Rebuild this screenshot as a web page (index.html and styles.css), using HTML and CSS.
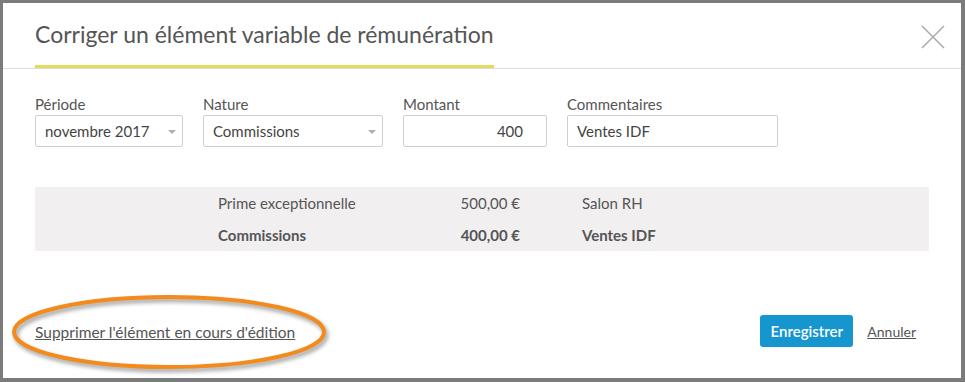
FILE: index.html
```html
<!DOCTYPE html>
<html lang="fr">
<head>
<meta charset="utf-8">
<title>Corriger un élément variable de rémunération</title>
<link rel="stylesheet" href="styles.css">
</head>
<body>
<div class="modal">
  <div class="header">
    <h1 class="title">Corriger un élément variable de rémunération</h1>
    <button class="close" aria-label="Fermer">
      <svg width="24" height="24" viewBox="0 0 24 24"><path d="M1 1 L23 23 M23 1 L1 23" stroke="#a9a9a9" stroke-width="1.5" fill="none"/></svg>
    </button>
  </div>
  <div class="body">
    <div class="fields">
      <div class="field f-periode">
        <label>Période</label>
        <div class="input select">novembre 2017<span class="caret"></span></div>
      </div>
      <div class="field f-nature">
        <label>Nature</label>
        <div class="input select">Commissions<span class="caret"></span></div>
      </div>
      <div class="field f-montant">
        <label>Montant</label>
        <div class="input num">400</div>
      </div>
      <div class="field f-comment">
        <label>Commentaires</label>
        <div class="input">Ventes IDF</div>
      </div>
    </div>
    <div class="table">
      <div class="row">
        <span></span><span class="name">Prime exceptionnelle</span><span class="amount">500,00 €</span><span class="comment">Salon RH</span>
      </div>
      <div class="row current">
        <span></span><span class="name">Commissions</span><span class="amount">400,00 €</span><span class="comment">Ventes IDF</span>
      </div>
    </div>
  </div>
  <div class="footer">
    <div class="delete-wrap">
      <a class="link delete" href="#">Supprimer l'élément en cours d'édition</a>
      <svg class="circle" width="330" height="84" viewBox="0 0 330 84"><ellipse cx="162" cy="39" rx="155" ry="35" fill="none" stroke="#f28a1c" stroke-width="4"/></svg>
    </div>
    <div class="actions">
      <button class="btn">Enregistrer</button>
      <a class="link cancel" href="#">Annuler</a>
    </div>
  </div>
</div>
</body>
</html>
```
FILE: styles.css
```css
* { box-sizing: border-box; }
html, body { margin: 0; height: 382px; overflow: hidden; }
body {
  background: #7b7b7b;
  padding: 3px 4px 4px 3px;
  font-family: Lato, "Open Sans", sans-serif;
  color: #555;
}
.modal {
  background: #fff;
  height: 375px;
  display: flex;
  flex-direction: column;
}
.header {
  position: relative;
  border-bottom: 1px solid #dcdcdc;
  padding: 0 32px;
  height: 66px;
}
.title {
  margin: 0;
  display: inline-block;
  font-size: 23px;
  font-weight: 400;
  color: #555;
  line-height: 30px;
  padding-top: 16px;
  padding-bottom: 16px;
  border-bottom: 3px solid #e2db5c;
}
.close {
  position: absolute;
  right: 16px;
  top: 22px;
  background: none;
  border: 0;
  padding: 0;
  width: 24px;
  height: 24px;
}
.body { padding: 25px 32px 0; }
.fields { display: flex; }
.field { display: flex; flex-direction: column; margin-right: 20px; }
.field label { font-size: 15px; line-height: 20px; margin-bottom: 1px; color: #555; }
.f-periode { width: 148px; }
.f-nature { width: 180px; }
.f-montant { width: 144px; }
.f-comment { width: 211px; }
.input {
  position: relative;
  height: 32px;
  border: 1px solid #cfcfcf;
  border-radius: 2px;
  padding: 0 9px;
  font-size: 15px;
  line-height: 30px;
  color: #444;
}
.input.num { text-align: right; padding-right: 23px; }
.caret {
  position: absolute;
  right: 6px;
  top: 14px;
  width: 0; height: 0;
  border-left: 4px solid transparent;
  border-right: 4px solid transparent;
  border-top: 4px solid #b0b0b0;
}
.table {
  margin-top: 40px;
  background: #f1eff0;
}
.row {
  display: grid;
  grid-template-columns: 183px 200px 102px 1fr;
  height: 32px;
  align-items: center;
  font-size: 15px;
  color: #555;
}
.row .amount { text-align: right; }
.row .comment { padding-left: 62px; }
.row.current { font-weight: 700; }
.footer {
  margin-top: auto;
  display: flex;
  justify-content: space-between;
  align-items: center;
  padding: 0 45px 31px 32px;
}
.delete-wrap { position: relative; }
.circle {
  position: absolute;
  left: -28px;
  top: -29px;
  filter: drop-shadow(2px 3px 2px rgba(0,0,0,0.4));
  pointer-events: none;
}
.link { color: #555; font-size: 15px; text-decoration: underline; }
.delete { font-size: 15.5px; }
.cancel { font-size: 14px; }
.actions { display: flex; align-items: center; }
.btn {
  background: #1596cf;
  color: #fff;
  border: 0;
  border-radius: 3px;
  height: 32px;
  width: 93px;
  font-family: inherit;
  font-size: 15px;
  font-weight: 600;
  margin-right: 14px;
}
```
